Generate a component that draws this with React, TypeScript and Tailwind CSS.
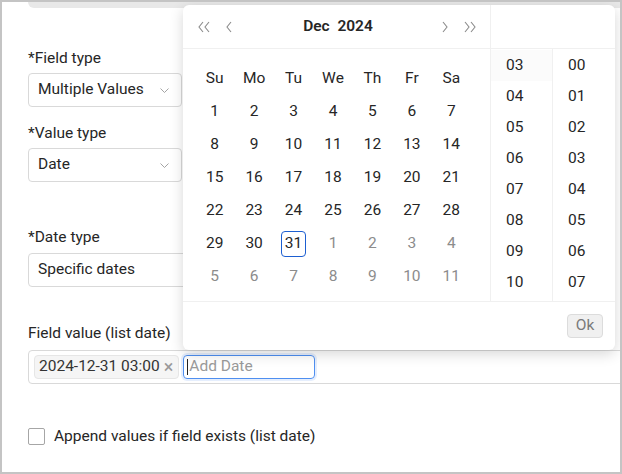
import React from "react";

const font = { fontFamily: "Roboto, 'Noto Sans', sans-serif" };

function Chevron() {
  return (
    <svg width="9" height="5" viewBox="0 0 9 5" className="text-[#9a9a9a]">
      <path d="M0.5 0.5l4 4 4-4" fill="none" stroke="currentColor" strokeWidth="0.9" />
    </svg>
  );
}

function Select({ value, w, chevron = true }: { value: string; w: string; chevron?: boolean }) {
  return (
    <div className={`${w} h-[34px] border border-[#d9d9d9] rounded-[4px] flex items-center justify-between pl-[9px] pr-[12px] text-[15.5px] text-[#262626] bg-white`}>
      <span>{value}</span>
      {chevron && <Chevron />}
    </div>
  );
}

const weeks: [number, boolean][][] = [
  [1, 2, 3, 4, 5, 6, 7].map((d) => [d, true]),
  [8, 9, 10, 11, 12, 13, 14].map((d) => [d, true]),
  [15, 16, 17, 18, 19, 20, 21].map((d) => [d, true]),
  [22, 23, 24, 25, 26, 27, 28].map((d) => [d, true]),
  [[29, true], [30, true], [31, true], [1, false], [2, false], [3, false], [4, false]],
  [5, 6, 7, 8, 9, 10, 11].map((d) => [d, false]),
];

function ArrowIcon({ dir, dbl }: { dir: "l" | "r"; dbl?: boolean }) {
  const p = dir === "l" ? "M6 1L2 6l4 5" : "M2 1l4 5-4 5";
  return (
    <svg width={dbl ? 14 : 8} height="12" viewBox={dbl ? "0 0 14 12" : "0 0 8 12"} className="text-[#8c8c8c]">
      <path d={p} fill="none" stroke="currentColor" strokeWidth="1.1" />
      {dbl && <path d={p} transform="translate(6 0)" fill="none" stroke="currentColor" strokeWidth="1.1" />}
    </svg>
  );
}

function Popup() {
  const hours = ["03", "04", "05", "06", "07", "08", "09", "10"];
  const mins = ["00", "01", "02", "03", "04", "05", "06", "07"];
  return (
    <div className="absolute left-[181px] top-[3px] w-[432px] h-[345px] bg-white rounded-[6px] shadow-[0_4px_14px_rgba(0,0,0,0.16)] flex flex-col overflow-hidden">
      <div className="flex flex-1 min-h-0">
        <div className="w-[308px] border-r border-[#f0f0f0] flex flex-col">
          <div className="h-[44px] border-b border-[#f0f0f0] flex items-center pl-[14px] pr-[13px]">
            <div className="flex items-center gap-[14px]">
              <ArrowIcon dir="l" dbl />
              <ArrowIcon dir="l" />
            </div>
            <div className="flex-1 text-center font-semibold text-[15.5px] text-[#262626] pl-[2px]">
              Dec&nbsp;&nbsp;2024
            </div>
            <div className="flex items-center gap-[14px]">
              <ArrowIcon dir="r" />
              <ArrowIcon dir="r" dbl />
            </div>
          </div>
          <div className="pl-[12px] pt-[13px]">
            <div className="w-[276px] grid grid-cols-7 text-[15.5px] text-[#262626]">
              {["Su", "Mo", "Tu", "We", "Th", "Fr", "Sa"].map((d) => (
                <div key={d} className="h-[33px] flex items-center justify-center">{d}</div>
              ))}
              {weeks.flat().map(([d, cur], i) => (
                <div key={i} className="h-[33px] flex items-center justify-center">
                  <span
                    className={`w-[25px] h-[26px] flex items-center justify-center rounded-[4px] ${
                      cur ? "text-[#262626]" : "text-[#8c8c8c]"
                    } ${cur && d === 31 ? "border border-[#1d5fd1]" : ""}`}
                  >
                    {d}
                  </span>
                </div>
              ))}
            </div>
          </div>
        </div>
        <div className="flex-1 flex flex-col">
          <div className="h-[44px] border-b border-[#f0f0f0]" />
          <div className="flex flex-1 text-[15.5px] text-[#262626]">
            <div className="w-[62px] border-r border-[#f0f0f0] pt-[1px]">
              {hours.map((h, i) => (
                <div key={h} className={`h-[31px] flex items-center pl-[15px] ${i === 0 ? "bg-[#fbfbfb]" : ""}`}>{h}</div>
              ))}
            </div>
            <div className="flex-1 pt-[1px]">
              {mins.map((m) => (
                <div key={m} className="h-[31px] flex items-center pl-[15px]">{m}</div>
              ))}
            </div>
          </div>
        </div>
      </div>
      <div className="h-[49px] border-t border-[#f0f0f0] flex items-center justify-end pr-[12px]">
        <div className="w-[36px] h-[24px] rounded-[4px] bg-[#f0f0f0] border border-[#dcdcdc] flex items-center justify-center text-[15.5px] text-[#7a7a7a]">
          Ok
        </div>
      </div>
    </div>
  );
}

export default function App() {
  return (
    <div style={font} className="w-[622px] h-[474px] border-2 border-[#c4c4c4] bg-white relative overflow-hidden">
      <div className="ml-[26px] h-[8px] bg-[#e8e8e8] rounded-bl-[6px] -mt-[2px]" />
      <div className="pl-[26px] text-[15.5px] text-[#262626]">
        <div className="mt-[40px] h-[20px] leading-[20px]">*Field type</div>
        <div className="mt-[5px]"><Select value="Multiple Values" w="w-[154px]" /></div>
        <div className="mt-[16px] h-[20px] leading-[20px]">*Value type</div>
        <div className="mt-[5px]"><Select value="Date" w="w-[154px]" /></div>
        <div className="mt-[45px] h-[20px] leading-[20px]">*Date type</div>
        <div className="mt-[6px]"><Select value="Specific dates" w="w-[300px]" chevron={false} /></div>
        <div className="mt-[36px] h-[20px] leading-[20px]">Field value (list date)</div>
        <div className="mt-[7px] w-[640px] h-[34px] border border-[#d9d9d9] rounded-[4px] flex items-center pl-[5px] gap-[4px]">
          <div className="h-[24px] pl-[4px] pr-[5px] bg-[#f5f5f5] border border-[#e6e6e6] rounded-[4px] flex items-center gap-[4px] text-[15.5px] text-[#333]">
            <span>2024-12-31 03:00</span>
            <span className="text-[#999] text-[18px] leading-none">×</span>
          </div>
          <div className="w-[132px] h-[24px] border border-[#4f8ff0] rounded-[4px] shadow-[0_0_0_2px_rgba(79,143,240,0.15)] flex items-center pl-[3px] text-[#9a9a9a]">
            <span className="w-px h-[16px] bg-[#222] mr-[1px]" />
            Add Date
          </div>
        </div>
        <div className="mt-[41px] flex items-center gap-[9px]">
          <div className="w-[17px] h-[17px] border border-[#a6a6a6] rounded-[2px] bg-white" />
          <span>Append values if field exists (list date)</span>
        </div>
      </div>
      <Popup />
    </div>
  );
}
